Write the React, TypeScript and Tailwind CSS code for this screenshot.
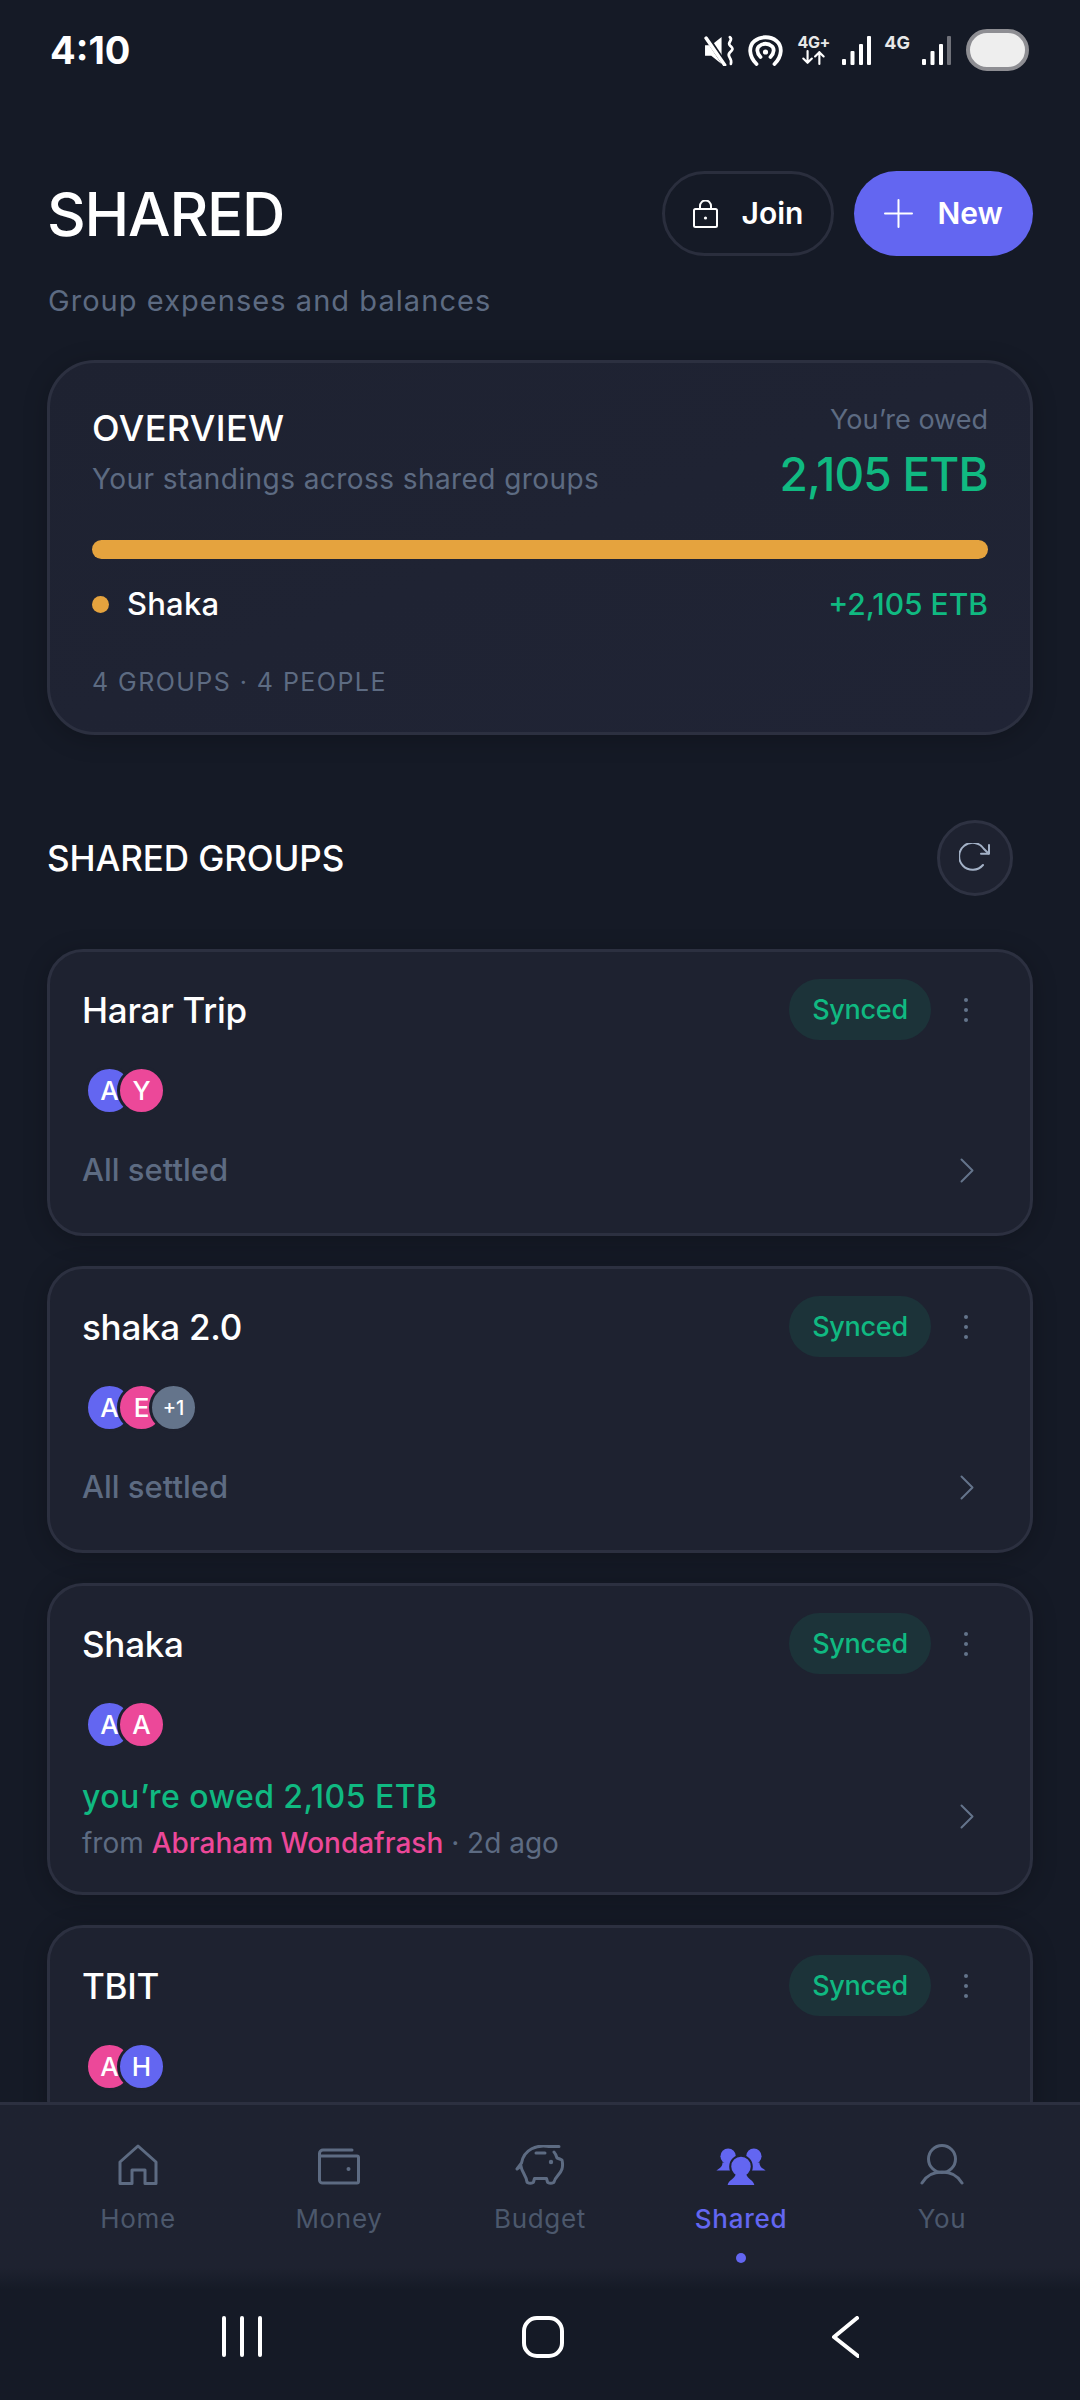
import React from "react";

function Signal({ dim = false }: { dim?: boolean }) {
  return (
    <svg width="29" height="29" viewBox="0 0 29 29" fill="#fff">
      <rect x="0" y="23" width="4" height="6" rx="1" />
      <rect x="8.5" y="15" width="4" height="14" rx="1" />
      <rect x="17" y="8" width="4" height="21" rx="1" />
      <rect x="25" y="0" width="4" height="29" rx="1" fill={dim ? "#6f7179" : "#fff"} />
    </svg>
  );
}

function StatusBar() {
  return (
    <div className="flex h-[100px] shrink-0 items-start justify-between pl-[50px] pr-[51px]">
      <div className="mt-[27px] text-[38px] font-bold leading-[46px] text-white">4:10</div>
      <div className="mt-[29px] flex items-center">
        <svg width="31" height="31" viewBox="0 0 30 30" fill="none">
          <path d="M1 10h6l10-8v26L7 20H1z" fill="#fff" />
          <path d="M2 1l18 27" stroke="#151a26" strokeWidth="5" />
          <path d="M2 3l18 26" stroke="#fff" strokeWidth="3.4" strokeLinecap="round" />
          <path d="M25 2c4 3-3 5 0 8s4 3 0 7 3 5 1 11" stroke="#fff" strokeWidth="2.6" strokeLinecap="round" />
        </svg>
        <svg className="ml-[13px]" width="35" height="31" viewBox="0 0 34 31" fill="none" stroke="#fff" strokeWidth="3.8" strokeLinecap="round">
          <path d="M8 29C0 21 0 11 6 6c6-5 16-5 22 0 6 5 6 15-2 23" />
          <path d="M12 22c-4-4-4-9-1-11 3-3 9-3 12 0 3 2 3 7-1 11" />
          <circle cx="17" cy="17" r="2.600" fill="#fff" stroke="none" />
        </svg>
        <div className="ml-[14px] flex w-[33px] flex-col items-center">
          <span className="text-[16px] font-bold leading-[15px] tracking-[-0.4px] text-[#e8e8e8]">4G+</span>
          <svg width="26" height="15" viewBox="0 0 24 14" fill="none" stroke="#fff" strokeWidth="2" strokeLinecap="round" strokeLinejoin="round">
            <path d="M6 1v11M2 8l4 4 4-4M17 13V2M13 6l4-4 4 4" />
          </svg>
        </div>
        <div className="ml-[12px]"><Signal /></div>
        <span className="mb-[14px] ml-[13px] text-[18px] font-bold leading-[16px] text-[#e8e8e8]">4G</span>
        <div className="ml-[12px]"><Signal dim /></div>
        <div className="ml-[15px] h-[42px] w-[63px] rounded-full border-[4px] border-[#8e8e93] bg-[#eeeeee]" />
      </div>
    </div>
  );
}

function Header() {
  return (
    <>
      <div className="mt-[71px] flex h-[85px] items-center justify-between">
        <h1 className="text-[60px] font-medium leading-[72px] tracking-[-1.2px] text-white">SHARED</h1>
        <div className="flex gap-[20px]">
          <button className="flex h-[85px] w-[172px] items-center justify-center gap-[24px] rounded-full border-[3px] border-[#2a2e3d] text-[30px] font-semibold text-white">
            <svg width="25" height="28" viewBox="0 0 25 28" fill="none" stroke="#fff" strokeWidth="2">
              <path d="M7 9V6a5.500 5.500 0 0 1 11 0v3" />
              <rect x="1" y="9" width="23" height="18" rx="1.500" />
              <circle cx="12.500" cy="18" r="1.600" fill="#fff" stroke="none" />
            </svg>
            Join
          </button>
          <button className="flex h-[85px] w-[179px] items-center justify-center gap-[24px] rounded-full bg-[#6366f1] text-[30px] font-semibold text-white">
            <svg width="29" height="29" viewBox="0 0 29 29" fill="none" stroke="#fff" strokeWidth="2" strokeLinecap="round">
              <path d="M14.500 1v27M1 14.500h27" />
            </svg>
            New
          </button>
        </div>
      </div>
      <p className="mt-[27px] pl-[1px] text-[29px] leading-[36px] tracking-[1.05px] text-[#5d6b82]">Group expenses and balances</p>
    </>
  );
}

function Overview() {
  return (
    <section className="mt-[41px] rounded-[48px] border-[3px] border-[#2c3040] bg-gradient-to-br from-[#1e2231] to-[#202435] px-[42px] pb-[34px] pt-[39px] shadow-[0_4px_24px_rgba(0,0,0,0.22)]">
      <div className="flex items-start justify-between">
        <div className="pt-[4px]">
          <h2 className="text-[36px] font-medium leading-[44px] tracking-[0.4px] text-white">OVERVIEW</h2>
          <p className="mt-[9px] text-[28px] leading-[40px] tracking-[0.43px] text-[#5d6b82]">Your standings across shared groups</p>
        </div>
        <div className="text-right">
          <p className="text-[27px] leading-[36px] text-[#5d6b82]">You’re owed</p>
          <p className="mt-[8px] text-[46px] font-medium leading-[56px] tracking-[-0.8px] text-[#10b981]">2,105 ETB</p>
        </div>
      </div>
      <div className="mt-[38px] h-[19px] rounded-full bg-[#e5a33e]" />
      <div className="mt-[25px] flex h-[40px] items-center justify-between">
        <div className="flex items-center gap-[18px]">
          <span className="h-[17px] w-[17px] rounded-full bg-[#e5a33e]" />
          <span className="text-[31px] font-medium tracking-[0.2px] text-white">Shaka</span>
        </div>
        <span className="text-[30px] font-medium tracking-[0px] text-[#10b981]">+2,105 ETB</span>
      </div>
      <p className="mt-[42px] text-[25px] leading-[32px] tracking-[1.45px] text-[#5d6b82]">4 GROUPS · 4 PEOPLE</p>
    </section>
  );
}

function SectionHead() {
  return (
    <div className="mt-[85px] flex items-center justify-between pr-[20px]">
      <h2 className="text-[35px] font-medium tracking-[-0.1px] text-white">SHARED GROUPS</h2>
      <button className="flex h-[76px] w-[76px] items-center justify-center rounded-full border-[3px] border-[#2e3242] bg-[#1e2230]">
        <svg width="32" height="30" viewBox="0 0 32 30" fill="none" stroke="#a3b1c6" strokeWidth="2" strokeLinecap="round" strokeLinejoin="round">
          <path d="M29.500 10.500L25 6A13.500 13.500 0 1 0 24 22" />
          <path d="M30 2v8.700h-8" />
        </svg>
      </button>
    </div>
  );
}

type Av = { l: string; c: string; small?: boolean };

function Avatars({ items }: { items: Av[] }) {
  return (
    <div className="ml-[3px] mt-[26px] flex">
      {items.map((a, i) => (
        <div
          key={i}
          className={`flex h-[49px] w-[49px] items-center justify-center rounded-full border-[3px] border-[#1e2230] font-medium text-white ${a.c} ${a.small ? "text-[20px]" : "text-[26px]"} ${i > 0 ? "-ml-[17px]" : ""}`}
        >
          {a.l}
        </div>
      ))}
    </div>
  );
}

function Chevron() {
  return (
    <svg width="14" height="25" viewBox="0 0 14 25" fill="none" stroke="#64748b" strokeWidth="2" strokeLinecap="round" strokeLinejoin="round">
      <path d="M1.500 1.500l11 11-11 11" />
    </svg>
  );
}

function CardHead({ title }: { title: string }) {
  return (
    <div className="flex h-[61px] items-center justify-between">
      <h3 className="pt-[2px] text-[35px] font-medium tracking-[-0.25px] text-white">{title}</h3>
      <div className="flex items-center">
        <span className="flex h-[61px] w-[142px] items-center justify-center rounded-full bg-[#1c3339] pt-[1px] text-[27px] font-medium tracking-[-0.3px] text-[#10b981]">Synced</span>
        <span className="ml-[33px] mr-[29px] flex flex-col gap-[6px]">
          <i className="block h-[4px] w-[4px] rounded-full bg-[#64748b]" />
          <i className="block h-[4px] w-[4px] rounded-full bg-[#64748b]" />
          <i className="block h-[4px] w-[4px] rounded-full bg-[#64748b]" />
        </span>
      </div>
    </div>
  );
}

function SettledCard({ title, avatars }: { title: string; avatars: Av[] }) {
  return (
    <article className="rounded-[36px] border-[3px] border-[#2c3040] bg-[#1e2230] pb-[43px] pl-[32px] pr-[33px] pt-[27px] shadow-[0_4px_24px_rgba(0,0,0,0.22)]">
      <CardHead title={title} />
      <Avatars items={avatars} />
      <div className="mt-[35px] flex h-[40px] items-center justify-between pr-[23px]">
        <span className="text-[31px] font-medium text-[#5d6b82]">All settled</span>
        <Chevron />
      </div>
    </article>
  );
}

function NavItem({ label, active, children }: { label: string; active?: boolean; children: React.ReactNode }) {
  return (
    <div className="flex w-[201px] flex-col items-center">
      <div className="flex h-[42px] items-end">{children}</div>
      <span className={`mt-[16px] text-[26px] leading-[36px] tracking-[0.7px] ${active ? "font-medium text-[#6366f1]" : "text-[#4c586c]"}`}>{label}</span>
      {active && <span className="mt-[16px] h-[10px] w-[10px] rounded-full bg-[#6366f1]" />}
    </div>
  );
}

function BottomNav() {
  return (
    <nav className="flex h-[188px] shrink-0 justify-center border-t-[3px] border-[#2c3040] bg-gradient-to-b from-[#1e2230] from-[88%] to-[#151a26] pt-[38px]">
      <NavItem label="Home">
        <svg width="40" height="41" viewBox="0 0 40 41" fill="none" stroke="#5d6b82" strokeWidth="3" strokeLinejoin="round">
          <path d="M2 39.500V18L20 2l18 16v21.500H27V26H14v13.500z" />
        </svg>
      </NavItem>
      <NavItem label="Money">
        <svg width="42" height="37" viewBox="0 0 42 37" fill="none" stroke="#5d6b82" strokeWidth="3" strokeLinecap="round" strokeLinejoin="round">
          <path d="M34 2H5a3.500 3.500 0 0 0-3.500 3.500V32A3 3 0 0 0 5 35h34a1.500 1.500 0 0 0 1.500-1.500V9.500A1.500 1.500 0 0 0 39 8H2" />
          <circle cx="30.500" cy="21" r="2" fill="#5d6b82" stroke="none" />
        </svg>
      </NavItem>
      <NavItem label="Budget">
        <svg width="51" height="40" viewBox="0 0 51 40" fill="none" stroke="#5d6b82" strokeWidth="3" strokeLinecap="round" strokeLinejoin="round">
          <path d="M44 1.500H34C22-.5 9 4 6.500 18L2 24l4-3c.5 6 5 9 6 16 .5 1.500 6 1.500 6.500 0l1-3.500h12l1 3.500c.5 1.500 6 1.500 6.500 0 1-5 6-7 8-13 .5-2 .5-7 0-9-2-1-3.500-1.500-5-2-1-3-2-5-3-6" />
          <path d="M21 8h9" />
          <circle cx="36" cy="17" r="2.200" fill="#5d6b82" stroke="none" />
        </svg>
      </NavItem>
      <NavItem label="Shared" active>
        <svg width="50" height="37" viewBox="0 0 48 36" fill="#6366f1">
          <circle cx="11.500" cy="8" r="7.500" />
          <path d="M0 22c2-2 6-3 6-8h11c0 5 4 6 4 8z" />
          <circle cx="36.500" cy="8" r="7.500" />
          <path d="M48 22c-2-2-6-3-6-8H31c0 5-4 6-6 8z" />
          <circle cx="24" cy="18" r="10.500" stroke="#1e2230" strokeWidth="2" />
          <path d="M11 36c1-5 7-6 8-11h10c1 5 7 6 8 11z" />
        </svg>
      </NavItem>
      <NavItem label="You">
        <svg width="44" height="41" viewBox="0 0 44 41" fill="none" stroke="#5d6b82" strokeWidth="3" strokeLinecap="round">
          <circle cx="22" cy="15" r="13.500" />
          <path d="M2 39c4-7 11-11 20-11s16 4 20 11" />
        </svg>
      </NavItem>
    </nav>
  );
}

function SystemBar() {
  return (
    <div className="flex h-[110px] shrink-0 items-start bg-[#151a26] pt-[26px]">
      <div className="ml-[222px] flex h-[41px] gap-[14px]">
        <i className="block h-full w-[4px] rounded-full bg-white" />
        <i className="block h-full w-[4px] rounded-full bg-white" />
        <i className="block h-full w-[4px] rounded-full bg-white" />
      </div>
      <div className="ml-[260px] h-[42px] w-[42px] rounded-[15px] border-[4px] border-white" />
      <svg className="ml-[267px]" width="28" height="42" viewBox="0 0 28 42" fill="none" stroke="#fff" strokeWidth="4" strokeLinecap="round" strokeLinejoin="round">
        <path d="M26 2L3 21l24 19" />
      </svg>
    </div>
  );
}

export default function App() {
  return (
    <div className="flex h-[2400px] w-[1080px] flex-col overflow-hidden bg-[#151a26] font-[Inter,sans-serif]">
      <StatusBar />
      <main className="min-h-0 flex-1 overflow-hidden px-[47px]">
        <Header />
        <Overview />
        <SectionHead />
        <div className="mt-[53px] flex flex-col gap-[30px]">
          <SettledCard title="Harar Trip" avatars={[{ l: "A", c: "bg-[#6366f1]" }, { l: "Y", c: "bg-[#ec4899]" }]} />
          <SettledCard title="shaka 2.0" avatars={[{ l: "A", c: "bg-[#6366f1]" }, { l: "E", c: "bg-[#ec4899]" }, { l: "+1", c: "bg-[#64748b]", small: true }]} />
          <article className="rounded-[36px] border-[3px] border-[#2c3040] bg-[#1e2230] pb-[29px] pl-[32px] pr-[33px] pt-[27px] shadow-[0_4px_24px_rgba(0,0,0,0.22)]">
            <CardHead title="Shaka" />
            <Avatars items={[{ l: "A", c: "bg-[#6366f1]" }, { l: "A", c: "bg-[#ec4899]" }]} />
            <div className="mt-[28px] flex items-center justify-between pr-[23px]">
              <div>
                <p className="text-[32px] font-medium leading-[40px] tracking-[0.45px] text-[#10b981]">you’re owed 2,105 ETB</p>
                <p className="mt-[6px] text-[28px] leading-[40px] text-[#5d6b82]">
                  from <span className="font-medium text-[#ec4899]">Abraham Wondafrash</span> · 2d ago
                </p>
              </div>
              <div className="mb-[8px]"><Chevron /></div>
            </div>
          </article>
          <article className="rounded-[36px] border-[3px] border-[#2c3040] bg-[#1e2230] pb-[41px] pl-[32px] pr-[33px] pt-[27px] shadow-[0_4px_24px_rgba(0,0,0,0.22)]">
            <CardHead title="TBIT" />
            <Avatars items={[{ l: "A", c: "bg-[#ec4899]" }, { l: "H", c: "bg-[#6366f1]" }]} />
          </article>
        </div>
      </main>
      <BottomNav />
      <SystemBar />
    </div>
  );
}
